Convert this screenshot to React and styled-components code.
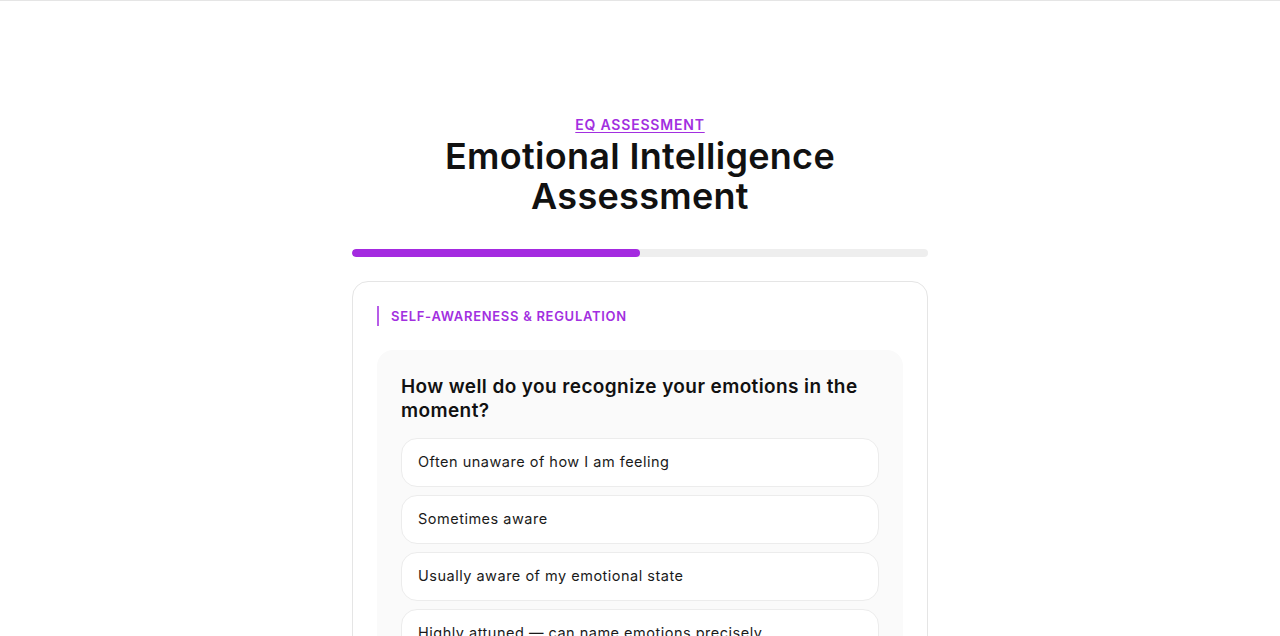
import React from "react";
import styled, { createGlobalStyle } from "styled-components";

const Global = createGlobalStyle`
  html, body { margin: 0; padding: 0; background: #ffffff; }
  body { font-family: "Inter", "Noto Sans", sans-serif; color: #111111; }
  * { box-sizing: border-box; }
`;

const Page = styled.div`
  border-top: 1px solid #e5e5e5;
  min-height: 636px;
  padding-top: 114px;
  display: flex;
  justify-content: center;
`;

const Column = styled.main`
  width: 576px;
  display: flex;
  flex-direction: column;
`;

const Header = styled.header`
  display: flex;
  flex-direction: column;
  align-items: center;
  text-align: center;
`;

const Eyebrow = styled.a`
  font-size: 14px;
  line-height: 20px;
  font-weight: 600;
  color: #a22fe0;
  text-decoration: underline;
  text-underline-offset: 2px;
  letter-spacing: 0.8px;
  margin-bottom: 1px;
`;

const Title = styled.h1`
  margin: 0;
  font-size: 36px;
  line-height: 40px;
  font-weight: 600;
  letter-spacing: 0.3px;
  color: #111111;
  max-width: 440px;
`;

const Track = styled.div`
  margin-top: 33px;
  height: 8px;
  border-radius: 4px;
  background: #eeeeee;
  overflow: hidden;
`;

const Fill = styled.div`
  height: 100%;
  border-radius: 4px;
  background: #a42ae0;
`;

const Card = styled.section`
  margin-top: 24px;
  border: 1px solid #e5e5e5;
  border-radius: 16px;
  padding: 24px;
  display: flex;
  flex-direction: column;
  gap: 24px;
`;

const SectionLabel = styled.div`
  border-left: 2px solid #b75de8;
  padding-left: 12px;
  font-size: 13px;
  line-height: 20px;
  font-weight: 600;
  color: #a22fe0;
  text-transform: uppercase;
  letter-spacing: 0.7px;
`;

const QuestionBox = styled.div`
  background: #fafafa;
  border-radius: 16px;
  padding: 25px 24px 24px;
  display: flex;
  flex-direction: column;
  gap: 15px;
`;

const Question = styled.h2`
  margin: 0;
  font-size: 19px;
  line-height: 24px;
  font-weight: 600;
  color: #111111;
  letter-spacing: 0.4px;
`;

const Options = styled.div`
  display: flex;
  flex-direction: column;
  gap: 8px;
`;

const Option = styled.button`
  all: unset;
  box-sizing: border-box;
  display: block;
  width: 100%;
  background: #ffffff;
  border: 1px solid #ececec;
  border-radius: 16px;
  padding: 13px 16px 15px;
  font-family: "Inter", "Noto Sans", sans-serif;
  font-size: 14.5px;
  line-height: 19px;
  letter-spacing: 0.5px;
  color: #1a1a1a;
  cursor: pointer;
`;

const options = [
  "Often unaware of how I am feeling",
  "Sometimes aware",
  "Usually aware of my emotional state",
  "Highly attuned — can name emotions precisely",
];

export default function App() {
  const progress = 50;
  return (
    <>
      <Global />
      <Page>
        <Column>
          <Header>
            <Eyebrow href="#">EQ ASSESSMENT</Eyebrow>
            <Title>Emotional Intelligence Assessment</Title>
          </Header>
          <Track>
            <Fill style={{ width: `${progress}%` }} />
          </Track>
          <Card>
            <SectionLabel>Self-Awareness &amp; Regulation</SectionLabel>
            <QuestionBox>
              <Question>How well do you recognize your emotions in the moment?</Question>
              <Options>
                {options.map((o) => (
                  <Option key={o}>{o}</Option>
                ))}
              </Options>
            </QuestionBox>
          </Card>
        </Column>
      </Page>
    </>
  );
}
